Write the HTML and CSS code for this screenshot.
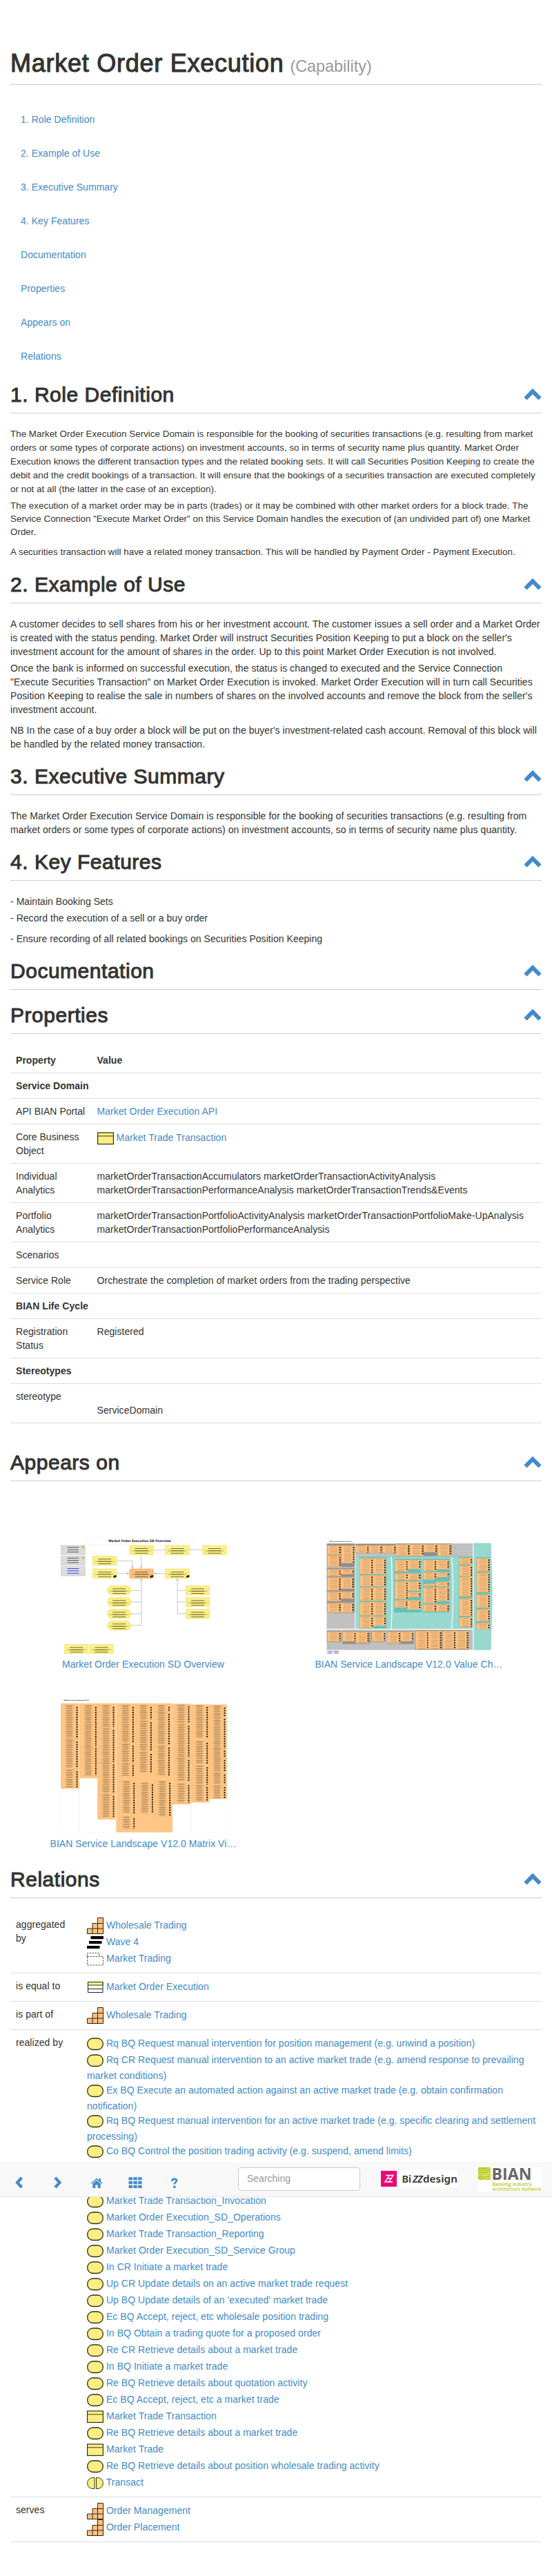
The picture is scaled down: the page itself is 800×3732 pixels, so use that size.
FILE: index.html
```
<!DOCTYPE html>
<html lang="en">
<head>
<meta charset="utf-8">
<title>Market Order Execution</title>
<link rel="stylesheet" href="styles.css">
</head>
<body>
<svg class="defs" aria-hidden="true">
  <symbol id="up" viewBox="0 0 28 18"><path d="M3.500 14.500 14 4l10.500 10.500" fill="none" stroke="#428bca" stroke-width="6"/></symbol>
  <symbol id="service" viewBox="0 0 24 24"><rect x=".7" y="4" width="22.600" height="16.500" rx="8" fill="#fbef83" stroke="#333012" stroke-width="1.300"/></symbol>
  <symbol id="object" viewBox="0 0 24 24"><rect x=".6" y="4" width="22.800" height="16.500" fill="#fbef83" stroke="#333012" stroke-width="1.200"/><path d="M1 8.800h22" stroke="#857d3f" stroke-width="1.600"/></symbol>
  <symbol id="steps" viewBox="0 0 24 24"><path d="M.5 23.500V16H8V8.500h7.500V.5h8v23z" fill="#fdc282" stroke="#33230f"/><path d="M8 16v7.500M15.500 8.500v15M8 16h15.500M15.500 8.500h8" stroke="#33230f" fill="none"/></symbol>
  <symbol id="plateau" viewBox="0 0 24 24"><path d="M5.500 3H24v4.200H5.500zM3 10h18.500v4H3zM0 17h18.500v4H0z"/></symbol>
  <symbol id="group" viewBox="0 0 24 24"><path d="M.5 8.500v-5h17.500v5M.5 8.500h23v12.500H.5z" fill="none" stroke="#555" stroke-dasharray="2.500 1.500"/></symbol>
  <symbol id="class" viewBox="0 0 24 24"><path d="M1.500 4.500h21.500v15H1.500z" fill="#fff" stroke="#222"/><path d="M1.500 4.500h21.500V9H1.500z" fill="#ffff80" stroke="#222"/><path d="M1.500 14.500h21.500" stroke="#222"/></symbol>
  <symbol id="interaction" viewBox="0 0 24 24"><path d="M11 4.500v16H9C4 20.500.7 17 .7 12.500S4 4.500 9 4.500zM13.500 4.500v16H15c5 0 8.300-3.500 8.300-8s-3.300-8-8.300-8z" fill="#fbef83" stroke="#333012"/></symbol>
</svg>

<main class="page">
  <h1 class="title">Market Order Execution <small class="kind">(Capability)</small></h1>
  <nav class="toc">
    <a>1. Role Definition</a><a>2. Example of Use</a><a>3. Executive Summary</a><a>4. Key Features</a><a>Documentation</a><a>Properties</a><a>Appears on</a><a>Relations</a>
  </nav>

  <h2 class="heading">1. Role Definition<svg class="up"><use href="#up"/></svg></h2>
  <div class="text text-small">
    <p>The Market Order Execution Service Domain is responsible for the booking of securities transactions (e.g. resulting from market<br>orders or some types of corporate actions) on investment accounts, so in terms of security name plus quantity. Market Order<br>Execution knows the different transaction types and the related booking sets. It will call Securities Position Keeping to create the<br>debit and the credit bookings of a transaction. It will ensure that the bookings of a securities transaction are executed completely<br>or not at all (the latter in the case of an exception).</p>
    <p class="tight">The execution of a market order may be in parts (trades) or it may be combined with other market orders for a block trade. The<br>Service Connection "Execute Market Order" on this Service Domain handles the execution of (an undivided part of) one Market<br>Order.</p>
    <p class="last">A securities transaction will have a related money transaction. This will be handled by Payment Order - Payment Execution.</p>
  </div>

  <h2 class="heading">2. Example of Use<svg class="up"><use href="#up"/></svg></h2>
  <div class="text">
    <p>A customer decides to sell shares from his or her investment account. The customer issues a sell order and a Market Order<br>is created with the status pending. Market Order will instruct Securities Position Keeping to put a block on the seller's<br>investment account for the amount of shares in the order. Up to this point Market Order Execution is not involved.</p>
    <p>Once the bank is informed on successful execution, the status is changed to executed and the Service Connection<br>"Execute Securities Transaction" on Market Order Execution is invoked. Market Order Execution will in turn call Securities<br>Position Keeping to realise the sale in numbers of shares on the involved accounts and remove the block from the seller's<br>investment account.</p>
    <p class="last">NB In the case of a buy order a block will be put on the buyer's investment-related cash account. Removal of this block will<br>be handled by the related money transaction.</p>
  </div>

  <h2 class="heading">3. Executive Summary<svg class="up"><use href="#up"/></svg></h2>
  <div class="text">
    <p>The Market Order Execution Service Domain is responsible for the booking of securities transactions (e.g. resulting from<br>market orders or some types of corporate actions) on investment accounts, so in terms of security name plus quantity.</p>
  </div>

  <h2 class="heading">4. Key Features<svg class="up"><use href="#up"/></svg></h2>
  <div class="text">
    <p>- Maintain Booking Sets</p>
    <p>- Record the execution of a sell or a buy order</p>
    <p class="last">- Ensure recording of all related bookings on Securities Position Keeping</p>
  </div>

  <h2 class="heading">Documentation<svg class="up"><use href="#up"/></svg></h2>
  <div class="empty"></div>

  <h2 class="heading">Properties<svg class="up"><use href="#up"/></svg></h2>
  <table class="grid props">
    <tr><th class="name">Property</th><th>Value</th></tr>
    <tr><th colspan="2">Service Domain</th></tr>
    <tr><td>API BIAN Portal</td><td><a>Market Order Execution API</a></td></tr>
    <tr><td>Core Business<br>Object</td><td><svg class="icon"><use href="#object"/></svg> <a>Market Trade Transaction</a></td></tr>
    <tr><td>Individual<br>Analytics</td><td>marketOrderTransactionAccumulators marketOrderTransactionActivityAnalysis<br>marketOrderTransactionPerformanceAnalysis marketOrderTransactionTrends&amp;Events</td></tr>
    <tr><td>Portfolio<br>Analytics</td><td>marketOrderTransactionPortfolioActivityAnalysis marketOrderTransactionPortfolioMake-UpAnalysis<br>marketOrderTransactionPortfolioPerformanceAnalysis</td></tr>
    <tr><td>Scenarios</td><td></td></tr>
    <tr><td>Service Role</td><td>Orchestrate the completion of market orders from the trading perspective</td></tr>
    <tr><th colspan="2">BIAN Life Cycle</th></tr>
    <tr><td>Registration<br>Status</td><td>Registered</td></tr>
    <tr><th colspan="2">Stereotypes</th></tr>
    <tr><td>stereotype</td><td><br>ServiceDomain</td></tr>
  </table>

  <h2 class="heading heading-far">Appears on<svg class="up"><use href="#up"/></svg></h2>
  <div class="thumbs">
    <a class="thumb"><svg class="thumb-img" id="overview" viewBox="82.500 6 720 594"></svg>Market Order Execution SD Overview</a>
    <a class="thumb"><svg class="thumb-img" id="chain" viewBox="67.500 6 720 594"></svg>BIAN Service Landscape V12.0 Value Ch…</a>
    <a class="thumb"><svg class="thumb-img" id="matrix" viewBox="82.500 96 720 594"></svg>BIAN Service Landscape V12.0 Matrix Vi…</a>
  </div>

  <h2 class="heading heading-rel">Relations<svg class="up"><use href="#up"/></svg></h2>
  <table class="grid rels">
    <tr><td class="name">aggregated<br>by</td><td><div><svg class="icon"><use href="#steps"/></svg> <a>Wholesale Trading</a></div><div><svg class="icon"><use href="#plateau"/></svg> <a>Wave 4</a></div><div><svg class="icon"><use href="#group"/></svg> <a>Market Trading</a></div></td></tr>
    <tr><td>is equal to</td><td><div><svg class="icon"><use href="#class"/></svg> <a>Market Order Execution</a></div></td></tr>
    <tr><td>is part of</td><td><div><svg class="icon"><use href="#steps"/></svg> <a>Wholesale Trading</a></div></td></tr>
    <tr><td>realized by</td><td>
      <div><svg class="icon"><use href="#service"/></svg> <a>Rq BQ Request manual intervention for position management (e.g. unwind a position)</a></div>
      <div><svg class="icon"><use href="#service"/></svg> <a>Rq CR Request manual intervention to an active market trade (e.g. amend response to prevailing<br>market conditions)</a></div>
      <div><svg class="icon"><use href="#service"/></svg> <a>Ex BQ Execute an automated action against an active market trade (e.g. obtain confirmation<br>notification)</a></div>
      <div><svg class="icon"><use href="#service"/></svg> <a>Rq BQ Request manual intervention for an active market trade (e.g. specific clearing and settlement<br>processing)</a></div>
      <div><svg class="icon"><use href="#service"/></svg> <a>Co BQ Control the position trading activity (e.g. suspend, amend limits)</a></div>
      <div><svg class="icon"><use href="#service"/></svg></div>
      <div><svg class="icon"><use href="#service"/></svg></div>
      <div><svg class="icon"><use href="#service"/></svg> <a>Market Trade Transaction_Invocation</a></div>
      <div><svg class="icon"><use href="#service"/></svg> <a>Market Order Execution_SD_Operations</a></div>
      <div><svg class="icon"><use href="#service"/></svg> <a>Market Trade Transaction_Reporting</a></div>
      <div><svg class="icon"><use href="#service"/></svg> <a>Market Order Execution_SD_Service Group</a></div>
      <div><svg class="icon"><use href="#service"/></svg> <a>In CR Initiate a market trade</a></div>
      <div><svg class="icon"><use href="#service"/></svg> <a>Up CR Update details on an active market trade request</a></div>
      <div><svg class="icon"><use href="#service"/></svg> <a>Up BQ Update details of an 'executed' market trade</a></div>
      <div><svg class="icon"><use href="#service"/></svg> <a>Ec BQ Accept, reject, etc wholesale position trading</a></div>
      <div><svg class="icon"><use href="#service"/></svg> <a>In BQ Obtain a trading quote for a proposed order</a></div>
      <div><svg class="icon"><use href="#service"/></svg> <a>Re CR Retrieve details about a market trade</a></div>
      <div><svg class="icon"><use href="#service"/></svg> <a>In BQ Initiate a market trade</a></div>
      <div><svg class="icon"><use href="#service"/></svg> <a>Re BQ Retrieve details about quotation activity</a></div>
      <div><svg class="icon"><use href="#service"/></svg> <a>Ec BQ Accept, reject, etc a market trade</a></div>
      <div><svg class="icon"><use href="#object"/></svg> <a>Market Trade Transaction</a></div>
      <div><svg class="icon"><use href="#service"/></svg> <a>Re BQ Retrieve details about a market trade</a></div>
      <div><svg class="icon"><use href="#object"/></svg> <a>Market Trade</a></div>
      <div><svg class="icon"><use href="#service"/></svg> <a>Re BQ Retrieve details about position wholesale trading activity</a></div>
      <div><svg class="icon"><use href="#interaction"/></svg> <a>Transact</a></div>
    </td></tr>
    <tr><td>serves</td><td><div><svg class="icon"><use href="#steps"/></svg> <a>Order Management</a></div><div><svg class="icon"><use href="#steps"/></svg> <a>Order Placement</a></div></td></tr>
  </table>
</main>

<header class="navbar">
  <svg class="tools" viewBox="0 0 260 20" fill="#428bca">
    <path d="M9.500 3 3 10l6.500 7M58 3l6.500 7L58 17" fill="none" stroke="#428bca" stroke-width="4.200"/>
    <path d="M109.800 11 118 3.600l3.500 3.100V4h2.500v5l2.200 2-1 1-7.200-6.400-7.200 6.400zM112.300 11.800l5.700-5 5.700 5V18h-4v-4.500h-3.400V18h-4z"/>
    <path d="M164.500 2.300h5.500v4.200h-5.500zm6.800 0h5.500v4.200h-5.500zm6.800 0h5.500v4.200h-5.500zM164.500 8h5.500v4.200h-5.500zm6.800 0h5.500v4.200h-5.500zm6.800 0h5.500v4.200h-5.500zM164.500 13.700h5.500v4.200h-5.500zm6.800 0h5.500v4.200h-5.500zm6.800 0h5.500v4.200h-5.500z"/>
    <path d="M227.300 7.800c.2-2 1.500-3 3.400-3s3.300 1 3.300 2.500c0 2.200-3.200 2.200-3.200 5.200" fill="none" stroke="#428bca" stroke-width="2.700"/><circle cx="230.800" cy="16.300" r="1.900"/>
  </svg>
  <input class="search" placeholder="Searching">
  <svg class="bizz" viewBox="0 0 111 25">
    <path d="M0 0h111v25H0z" fill="#fff"/><path d="M0 1h23v23H0z" fill="#ec0677"/>
    <path d="M7 7.500h5.500L6 17h5M12.500 7.500H18L11.500 17H17M9 12h7" fill="none" stroke="#fff" stroke-width="1.400"/>
    <g class="bizz-text"><text x="30.500" y="17.500">Bi</text><text x="46" y="17.500" font-style="italic">Z</text><text x="53" y="17.500" font-style="italic">Z</text><text x="61" y="17.500" textLength="50" lengthAdjust="spacingAndGlyphs">design</text></g>
  </svg>
  <svg class="bian" viewBox="0 0 92 35">
    <path d="M0 0h92v35H0z" fill="#fff"/><path d="M0 0h18v18H0z" fill="#b9c91c"/>
    <path d="M0 3q9 2 18-2M0 6q9 2 18-2M0 9q9 2 18-2M0 12q8 1 18-4M1 18Q4 12 18 11M5 18q3-4 13-4M9 18q3-2 9-2" fill="none" stroke="#eaf0b0" stroke-width=".8"/>
    <text class="bian-name" x="19.500" y="18" textLength="58" lengthAdjust="spacingAndGlyphs">BIAN</text>
    <g class="bian-sub"><text x="20.500" y="26.500" textLength="57" lengthAdjust="spacingAndGlyphs">Banking Industry</text><text x="20.500" y="34" textLength="71" lengthAdjust="spacingAndGlyphs">Architecture Network</text></g>
  </svg>
</header>
<script src="thumbs.js"></script>
</body>
</html>
```

FILE: styles.css
```
* { box-sizing: border-box; }
body {
  margin: 0;
  position: relative;
  min-height: 3732px;
  background: #fff;
  color: #333;
  font: 14px/20px "Liberation Sans", Arial, sans-serif;
  letter-spacing: .043px;
}
a { color: #428bca; text-decoration: none; }
.defs { display: none; }
.page { padding: 72px 15px 0; }

.title {
  margin: 0;
  padding-bottom: 10px;
  border-bottom: 1px solid #ccc;
  font-size: 36px;
  font-weight: 400;
  line-height: 40px;
  letter-spacing: .75px;
  -webkit-text-stroke: 1.100px #333;
}
.kind { margin-left: -2px; font-size: 23.400px; line-height: 1; letter-spacing: 0; color: #999; -webkit-text-stroke: 0; }

.toc { display: flex; flex-direction: column; padding: 25px 0 15px; }
.toc a { padding: 14.500px 15px; }

.heading {
  display: flex;
  justify-content: space-between;
  margin: 0;
  height: 44px;
  border-bottom: 1px solid #ccc;
  font-size: 30px;
  font-weight: 400;
  line-height: 33px;
  letter-spacing: .52px;
  -webkit-text-stroke: 1px #333;
}
.heading-far { margin-top: 40px; }
.heading-rel { margin-top: 25px; }
.up { width: 28px; height: 18px; margin: 8px -1px 0 0; }

.text { padding: 20px 0; white-space: nowrap; }
.text p { margin: 0 0 4px; }
.text p:last-child { margin-bottom: 0; }
.text .last { margin-top: 10px; }
.text-small { font-size: 13.333px; }
.text .tight { line-height: 19px; }
.empty { height: 20px; }

.grid { width: 770px; margin-top: 20px; border-spacing: 0; border-bottom: 1px solid #ddd; table-layout: fixed; }
.grid td, .grid th { padding: 8px; border-top: 1px solid #ddd; text-align: left; vertical-align: top; white-space: nowrap; }
.grid tr:first-child > * { border-top: 0; }
.grid tr:not(:first-child) th { height: 37px; }
.props .name { width: 117.500px; }
.rels .name { width: 103px; }
.icon { display: inline-block; width: 24px; height: 24px; vertical-align: middle; }

.thumbs { display: grid; grid-template-columns: 385px 385px; row-gap: 42px; padding-top: 57px; }
.thumb { display: flex; flex-direction: column; align-items: center; }
.thumb-img { width: 240px; height: 198px; overflow: visible; }

.navbar {
  position: absolute;
  top: 3132px;
  left: 0;
  width: 800px;
  height: 51px;
  display: flex;
  align-items: flex-start;
  padding: 8px 15px 0 22px;
  background: #f8f8f8;
  border-bottom: 1px solid #e7e7e7;
}
.tools { width: 260px; height: 20px; margin-top: 12px; }
.search {
  width: 177px;
  height: 34px;
  margin-left: 63px;
  padding: 4px 12px 6px;
  border: 1px solid #ccc;
  border-radius: 4px;
  background: #fff;
  font: inherit;
}
.search::placeholder { color: #999; }
.bizz { width: 111px; height: 25px; margin: 4px 0 0 30px; overflow: visible; }
.bizz-text { font: 600 14.500px "Noto Sans", sans-serif; fill: #333; }
.bian { width: 92px; height: 35px; margin-left: 30px; overflow: visible; }
.bian-name { font: bold 24px "Open Sans", sans-serif; fill: #66676b; }
.bian-sub { font: 600 7.500px "Open Sans", sans-serif; fill: #b9c91c; }
.cap { font: bold 14px "DejaVu Sans", sans-serif; fill: #111; letter-spacing: 0; }
.cap-small { font-size: 6px; }
```

FILE: thumbs.js
```
// Draws the three diagram thumbnails from lists of boxes.
const rect = (x, y, w, h, fill, extra = '') =>
  `<rect x="${x}" y="${y}" width="${w}" height="${h}" fill="${fill}" ${extra}/>`;
const rows = (x, y, h, w, color, dash, opacity = 1) =>
  `<path d="M${x} ${y}v${h}" stroke="${color}" stroke-width="${w}" stroke-dasharray="${dash}" opacity="${opacity}"/>`;

// Market Order Execution overview
const note = (x, y, w = 103, h = 40, fill = '#fbef83', edge = '#efe06a', rx = 0) =>
  rect(x, y, w, h, fill, `stroke="${edge}" stroke-width="2" rx="${rx}"`) +
  (rx ? '' : `<path d="M${x + 2} ${y + 7}h${w - 4}" stroke="#fff8c0" stroke-width="2"/>`) +
  rows(x + w / 2, y + 12, 24, w * .55, '#3b3820', '3 7', .7) +
  rows(x + w / 2, y + 22, 4, w * .8, '#3b3820', '3 7', .35);
let o = rect(190, 85, 472, 26, '#fff', 'stroke="#e4e4e4"') +
  '<text class="cap" x="290" y="99" textLength="272" lengthAdjust="spacingAndGlyphs">Market Order Execution SD Overview</text>';
[114, 160, 206].forEach((y, i) => {
  o += rect(84, y, 104, 40, '#dcdcdc', 'stroke="#c6c6c6" stroke-width="2"');
  o += rows(136, y + 7, 28, 50, i == 2 ? '#2020ff' : '#333', '3 7', .8);
  o += i < 2 ? rect(175, y + 4, 9, 8, '#c5bb35') : '';
});
o += '<path d="M326 181h68v34M326 236h55M433 155v60M484 134h54M642 133h58M538 236h-52M388 310h45M388 360h45M388 411h45M388 461h45V256M627 310h-37M627 360h-37M627 411h-37V258" fill="none" stroke="#777" stroke-width="1.500" stroke-dasharray="5 1"/>';
[[394, 214], [433, 214], [433, 256], [590, 256]].forEach(([x, y]) => {
  const s = y < 220 ? -9 : 9;
  o += `<path d="M${x} ${y}l-5 ${s}h10z" fill="#fff" stroke="#666"/>`;
});
o += '<path d="M381 236l-9-5v10zM486 236l9-5v10zM642 133l6-5 6 5-6 5z" fill="#fff" stroke="#666"/>';
o += note(382, 114, 103, 40, '#fbef83', '#efe06a', 6);
[[538, 114], [700, 114], [222, 160], [222, 216], [538, 216], [627, 289], [627, 340], [627, 391], [99, 544], [208, 544]]
  .forEach(([x, y]) => { o += note(x, y); });
[289, 340, 391, 442].forEach(y => { o += note(285, y, 103, 40, '#fbef83', '#efe06a', 20); });
o += note(382, 216, 103, 41, '#fdc07e', '#eba765', 6);
[[312, 248], [472, 248], [629, 248]].forEach(([x, y]) => {
  o += `<path d="M${x} ${y + 6}v-7l7-3h6v6l-7 3z" fill="#000"/>`;
});
document.getElementById('overview').innerHTML = o;

// Orange column of services with a black marker on each row
const services = (x, y, w, h) =>
  rect(x, y, w, h, '#fdc282', 'stroke="#e9a662" stroke-width="1"') +
  rows(x + w * .48, y + 4, h - 6, w * .54, '#56432c', '1.500 5.500', .5) +
  rows(x + w - 4, y + 6, h - 8, 6, '#111', '5.500 5');

// Value chain landscape
let c = '<text class="cap cap-small" x="81" y="99" textLength="97" lengthAdjust="spacingAndGlyphs">BIAN Service Landscape V12.0 Value Chain</text>';
c += rect(69, 105, 636, 463, '#c0c0c0') + rect(707, 105, 75, 462, '#98d8cf', 'stroke="#78cfc4" stroke-width="2"');
c += '<path d="M782 105q14 230 0 462z" fill="#98d8cf"/>';
c += rect(194, 163, 511, 313, '#98d8cf', 'stroke="#70cabe" stroke-width="2"');
c += '<path d="M193 105v372M350 163q6 150 0 313M613 163q10 150 0 313M706 105v462" stroke="#eefaf8" stroke-width="4" fill="none"/>';
c += rect(69, 476, 636, 4, '#fff');
[[70, 106, 121, 102], [70, 213, 121, 36], [70, 250, 121, 63], [70, 314, 121, 45], [70, 360, 121, 47], [194, 108, 176, 40],
 [370, 106, 242, 54], [70, 486, 62, 47], [137, 486, 121, 56], [263, 486, 61, 47], [332, 486, 115, 56], [453, 483, 234, 84]]
  .forEach(b => { c += rect(...b, '#8f8f8f'); });
[[212, 165, 117, 310], [362, 172, 118, 233], [487, 172, 116, 233], [600, 226, 6, 38], [643, 164, 60, 307], [719, 165, 60, 315]]
  .forEach(b => { c += rect(...b, '#62c1ba'); });
[[72, 114, 58, 40], [133, 114, 57, 76], [72, 158, 58, 48], [72, 218, 58, 29], [130, 218, 57, 20], [72, 253, 58, 56], [130, 253, 57, 49],
 [72, 316, 58, 39], [130, 316, 57, 29], [72, 364, 58, 41], [130, 364, 57, 41], [195, 114, 57, 32], [252, 114, 57, 32], [312, 114, 57, 32],
 [371, 109, 58, 50], [431, 109, 59, 50], [491, 109, 58, 34], [551, 109, 59, 50], [213, 170, 57, 68], [270, 170, 56, 68],
 [213, 244, 57, 47], [270, 244, 56, 47], [213, 296, 57, 58], [270, 296, 56, 58], [213, 360, 57, 58], [270, 360, 56, 58],
 [213, 423, 57, 50], [270, 423, 56, 40], [365, 177, 57, 50], [421, 177, 56, 39], [365, 235, 57, 29], [421, 235, 56, 29],
 [365, 270, 57, 77], [421, 270, 56, 40], [421, 317, 56, 22], [365, 353, 55, 31], [421, 353, 56, 40], [489, 177, 56, 49],
 [545, 177, 56, 40], [489, 231, 56, 31], [545, 231, 56, 20], [489, 281, 56, 10], [545, 272, 56, 20], [489, 297, 56, 68],
 [545, 297, 56, 58], [489, 370, 56, 31], [545, 370, 56, 31], [645, 168, 57, 29], [645, 202, 57, 45], [645, 251, 57, 85],
 [645, 345, 57, 75], [645, 426, 57, 43], [721, 169, 57, 58], [721, 233, 57, 84], [721, 327, 57, 58], [721, 392, 57, 52], [721, 452, 57, 27],
 [72, 489, 58, 42], [139, 489, 57, 42], [196, 489, 57, 50], [266, 489, 58, 42], [333, 489, 57, 51], [390, 489, 56, 41],
 [455, 486, 57, 78], [511, 486, 57, 78], [573, 486, 56, 78], [629, 486, 56, 78]]
  .forEach(b => { c += services(...b); });
c += rect(69, 570, 54, 16, '#d9d7fa') + rows(83, 573, 11, 14, '#777', '1.500 3') + rows(111, 573, 11, 16, '#777', '1.500 3');
document.getElementById('chain').innerHTML = c;

// Matrix landscape
let m = '<text class="cap cap-small" x="95" y="100" textLength="110" lengthAdjust="spacingAndGlyphs">BIAN Service Landscape V12.0</text>';
[[84, 105, 78, 566], [166, 105, 155, 566], [570, 108, 78, 563], [650, 108, 153, 563]].forEach(b => {
  m += rect(...b, '#fff', 'stroke="#eee" stroke-width="1.500"');
});
[[84, 111, 78, 369], [166, 111, 78, 324], [243, 111, 78, 503], [325, 111, 242, 559], [570, 113, 78, 435], [650, 116, 77, 424], [726, 116, 78, 409]]
  .forEach(b => { m += rect(...b, '#ffc685', 'rx="3" stroke="#fbb970" stroke-width="1.500"'); });
[[84, 120, 145], [84, 270, 124], [84, 400, 78], [166, 120, 180], [166, 300, 125], [243, 120, 95], [243, 220, 148], [243, 370, 134],
 [243, 508, 100], [328, 120, 162], [328, 287, 83], [328, 373, 55], [406, 120, 62], [406, 187, 133], [406, 324, 90], [484, 120, 26],
 [484, 150, 141], [484, 296, 130], [332, 450, 140], [332, 604, 52], [412, 457, 132], [488, 450, 153], [570, 118, 80], [570, 202, 145],
 [570, 350, 100], [570, 460, 84], [650, 120, 142], [650, 276, 100], [650, 382, 84], [650, 468, 70], [726, 122, 46], [726, 172, 136],
 [726, 310, 38], [726, 350, 60], [726, 413, 48], [726, 468, 56]].forEach(([x, y, h]) => {
  m += rect(x + 5, y, 67, h, 'none', 'stroke="#f0b067"') +
    rows(x + 36, y - 2, h, 24, '#5b452c', '1.500 3.500', .55) + rows(x + 36, y + 1, h - 4, 38, '#5b452c', '1.500 8.500', .6) +
    rows(x + 69, y + 6, h - 8, 5.5, '#111', '6 4.500');
});
document.getElementById('matrix').innerHTML = m;
```
